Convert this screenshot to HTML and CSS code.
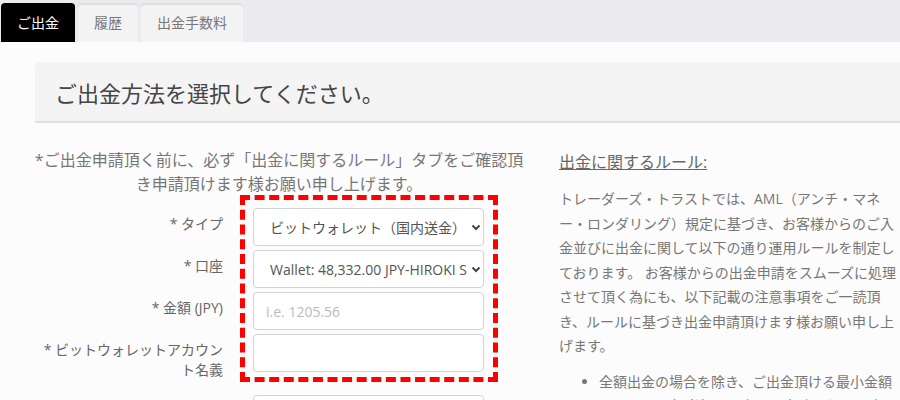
FILE: index.html
```html
<!DOCTYPE html>
<html lang="ja">
<head>
  <meta charset="UTF-8" />
  <meta name="viewport" content="width=device-width, initial-scale=1.0"/>
  <title>ご出金</title>
  <link rel="stylesheet" href="styles.css">
</head>
<body>
  <!-- Tabs -->
  <nav class="tabs">
    <a class="tab active" href="#">ご出金</a>
    <a class="tab" href="#">履歴</a>
    <a class="tab" href="#">出金手数料</a>
  </nav>

  <div class="page">
    <div class="page-title">
      <h1>ご出金方法を選択してください。</h1>
    </div>

    <div class="content">
      <!-- Left: withdraw form -->
      <div class="col-form">
        <p class="notice">*ご出金申請頂く前に、必ず「出金に関するルール」タブをご確認頂き申請頂けます様お願い申し上げます。</p>

        <form class="withdraw-form">
          <span class="highlight"></span>

          <label for="type">* タイプ</label>
          <div class="select-wrap">
            <select id="type" class="field">
              <option>ビットウォレット（国内送金）</option>
            </select>
            <svg width="10" height="7" viewBox="0 0 10 7"><polyline points="1.5,1.5 5,5 8.5,1.5" fill="none" stroke="#444" stroke-width="2"/></svg>
          </div>

          <label for="account">* 口座</label>
          <div class="select-wrap">
            <select id="account" class="field">
              <option>Wallet: 48,332.00 JPY-HIROKI S</option>
            </select>
            <svg width="10" height="7" viewBox="0 0 10 7"><polyline points="1.5,1.5 5,5 8.5,1.5" fill="none" stroke="#444" stroke-width="2"/></svg>
          </div>

          <label for="amount">* 金額 (JPY)</label>
          <input type="text" id="amount" class="field" placeholder="i.e. 1205.56" />

          <label for="holder">* ビットウォレットアカウント名義</label>
          <input type="text" id="holder" class="field" />

          <label for="walletId">* ウォレットID</label>
          <input type="text" id="walletId" class="field" />
        </form>
      </div>

      <!-- Right: rules -->
      <div class="col-rules">
        <h3>出金に関するルール:</h3>
        <p>トレーダーズ・トラストでは、AML（アンチ・マネー・ロンダリング）規定に基づき、お客様からのご入金並びに出金に関して以下の通り運用ルールを制定しております。 お客様からの出金申請をスムーズに処理させて頂く為にも、以下記載の注意事項をご一読頂き、ルールに基づき出金申請頂けます様お願い申し上げます。</p>
        <ul>
          <li>全額出金の場合を除き、ご出金頂ける最小金額は50ドル（相当額）以上にて申請をお願い致します。</li>
        </ul>
      </div>
    </div>
  </div>
</body>
</html>
```

FILE: styles.css
```css
/*
  Base
*/
* {
  box-sizing: border-box;
}
html,
body {
  margin: 0;
  overflow: hidden;
}
body {
  width: 900px;
  height: 400px;
  background: #fcfcfc;
  font-family: "Open Sans", "Noto Sans CJK JP", sans-serif;
  color: #666;
  text-autospace: no-autospace;
}
/*
  Tabs
*/
.tabs {
  display: flex;
  gap: 3px;
  height: 42px;
  padding: 3px 0 0 1px;
  background: #ebebef;
}
.tab {
  display: block;
  padding: 0 16px;
  line-height: 39px;
  font-size: 14px;
  color: #777;
  text-decoration: none;
  background: #f3f3f3;
  border-radius: 4px 4px 0 0;
  box-shadow: inset 0 2px 0 #dedede;
}
.tab.active {
  background: #000;
  color: #fff;
  box-shadow: none;
}
/*
  Page header
*/
.page {
  padding: 20px 0 0 35px;
}
.page-title {
  display: flex;
  align-items: center;
  height: 61px;
  padding-left: 20px;
  background: #f4f4f4;
  border-bottom: 2px solid #e0e0e0;
  border-top-left-radius: 4px;
}
.page-title h1 {
  margin: 0;
  font-size: 22px;
  font-weight: 400;
  color: #444;
}
/*
  Two columns
*/
.content {
  display: grid;
  grid-template-columns: 488px 340px;
  column-gap: 36px;
  margin-top: 25px;
}
.notice {
  margin: 0 -4px;
  text-align: center;
  font-size: 16px;
  line-height: 24px;
  color: #777;
}
/*
  Form
*/
.withdraw-form {
  position: relative;
  display: grid;
  grid-template-columns: 188px 231px;
  column-gap: 30px;
  row-gap: 4px;
  margin-top: 12px;
}
.withdraw-form label {
  padding: 6px 0 11px;
  text-align: right;
  font-size: 14px;
  line-height: 20px;
  color: #666;
}
.field {
  width: 100%;
  height: 38px;
  margin: 0;
  padding: 0 12px;
  font-family: inherit;
  font-size: 14px;
  color: #555;
  background: #fff;
  border: 1px solid #ced4da;
  border-radius: 4px;
  outline: none;
}
.field::placeholder {
  color: #bbb;
}
select.field {
  appearance: none;
  -webkit-appearance: none;
  padding: 0 10px 0 16px;
}
.select-wrap {
  position: relative;
}
.select-wrap svg {
  position: absolute;
  right: 3px;
  top: 16px;
  pointer-events: none;
}
/* red dashed marker round the inputs */
.highlight {
  position: absolute;
  left: 205px;
  top: -13px;
  width: 258px;
  height: 187px;
  border: 5px dashed #ff0000;
  pointer-events: none;
}
/*
  Rules column
*/
.col-rules h3 {
  margin: 2px 0 0;
  font-size: 16px;
  font-weight: 400;
  line-height: 24px;
  color: #666;
  text-decoration: underline;
}
.col-rules p {
  margin: 13px 0 0;
  font-size: 14px;
  line-height: 24.5px;
  color: #777;
}
.col-rules ul {
  margin: 11px 0 0;
  padding-left: 40px;
  font-size: 14px;
  line-height: 24.5px;
  color: #777;
}
```
